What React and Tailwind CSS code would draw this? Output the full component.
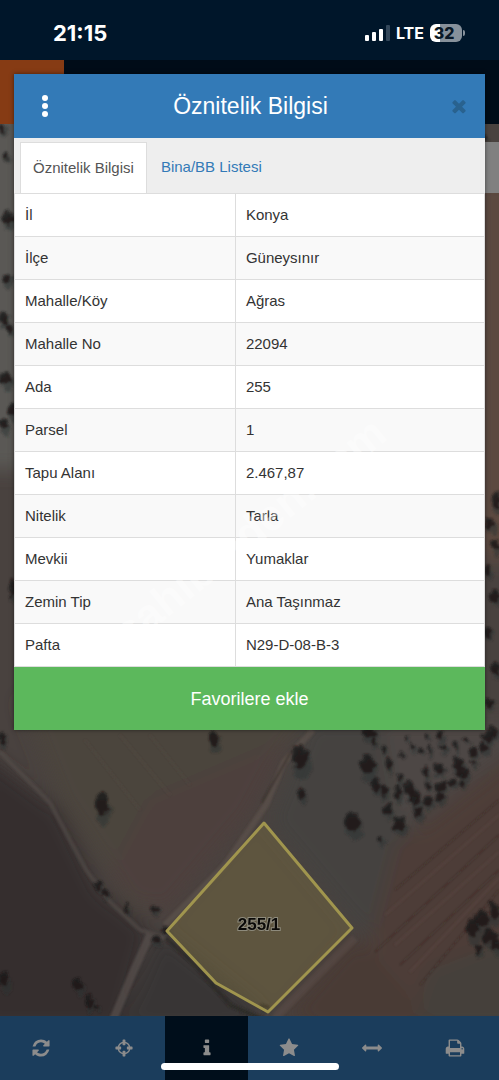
import React, { useState } from 'react';

const rows = [
  ['İl', 'Konya'],
  ['İlçe', 'Güneysınır'],
  ['Mahalle/Köy', 'Ağras'],
  ['Mahalle No', '22094'],
  ['Ada', '255'],
  ['Parsel', '1'],
  ['Tapu Alanı', '2.467,87'],
  ['Nitelik', 'Tarla'],
  ['Mevkii', 'Yumaklar'],
  ['Zemin Tip', 'Ana Taşınmaz'],
  ['Pafta', 'N29-D-08-B-3'],
];

const icons = {
  refresh:
    'M1639 1056q0 5-1 7-64 268-268 434.5t-478 166.5q-146 0-282.5-55t-243.5-157l-129 129q-19 19-45 19t-45-19-19-45v-448q0-26 19-45t45-19h448q26 0 45 19t19 45-19 45l-137 137q71 66 161 102t187 36q134 0 250-65t186-179q11-17 53-117 8-23 30-23h192q13 0 22.5 9.5t9.5 22.5zm25-800v448q0 26-19 45t-45 19h-448q-26 0-45-19t-19-45 19-45l138-138q-148-137-349-137-134 0-250 65t-186 179q-11 17-53 117-8 23-30 23h-199q-13 0-22.5-9.5t-9.5-22.5v-7q65-268 270-434.5t480-166.5q146 0 284 55.5t245 156.5l130-129q19-19 45-19t45 19 19 45z',
  locate:
    'M1325 1024h-109q-26 0-45-19t-19-45v-128q0-26 19-45t45-19h109q-32-108-112.5-188.5t-188.5-112.5v109q0 26-19 45t-45 19h-128q-26 0-45-19t-19-45v-109q-108 32-188.5 112.5t-112.5 188.5h109q26 0 45 19t19 45v128q0 26-19 45t-45 19h-109q32 108 112.5 188.5t188.5 112.5v-109q0-26 19-45t45-19h128q26 0 45 19t19 45v109q108-32 188.5-112.5t112.5-188.5zm339-192v128q0 26-19 45t-45 19h-143q-37 161-154.5 278.5t-278.5 154.5v143q0 26-19 45t-45 19h-128q-26 0-45-19t-19-45v-143q-161-37-278.5-154.5t-154.5-278.5h-143q-26 0-45-19t-19-45v-128q0-26 19-45t45-19h143q37-161 154.5-278.5t278.5-154.5v-143q0-26 19-45t45-19h128q26 0 45 19t19 45v143q161 37 278.5 154.5t154.5 278.5h143q26 0 45 19t19 45z',
  info:
    'M1216 1344v128q0 26-19 45t-45 19h-512q-26 0-45-19t-19-45v-128q0-26 19-45t45-19h64v-384h-64q-26 0-45-19t-19-45v-128q0-26 19-45t45-19h384q26 0 45 19t19 45v576h64q26 0 45 19t19 45zm-128-1152v192q0 26-19 45t-45 19h-256q-26 0-45-19t-19-45v-192q0-26 19-45t45-19h256q26 0 45 19t19 45z',
  star:
    'M1728 647q0 22-26 48l-363 354 86 500q1 7 1 20 0 21-10.5 35.5t-30.5 14.5q-19 0-40-12l-449-236-449 236q-22 12-40 12-21 0-31.5-14.5t-10.5-35.5q0-6 2-20l86-500-364-354q-25-27-25-48 0-37 56-46l502-73 225-455q19-41 49-41t49 41l225 455 502 73q56 9 56 46z',
  measure:
    'M1792 896q0 26-19 45l-256 256q-19 19-45 19t-45-19-19-45v-128h-1024v128q0 26-19 45t-45 19-45-19l-256-256q-19-19-19-45t19-45l256-256q19-19 45-19t45 19 19 45v128h1024v-128q0-26 19-45t45-19 45 19l256 256q19 19 19 45z',
  print:
    'M448 1536h896v-256h-896v256zm0-640h896v-384h-160q-40 0-68-28t-28-68v-160h-640v640zm1152 64q0-26-19-45t-45-19-45 19-19 45 19 45 45 19 45-19 19-45zm128 0v416q0 13-9.5 22.5t-22.5 9.5h-224v160q0 40-28 68t-68 28h-960q-40 0-68-28t-28-68v-160h-224q-13 0-22.5-9.5t-9.5-22.5v-416q0-79 56.5-135.5t135.5-56.5h64v-544q0-40 28-68t68-28h672q40 0 88 20t76 48l152 152q28 28 48 76t20 88v256h64q79 0 135.5 56.5t56.5 135.5z',
  close:
    'M1490 1322q0 40-28 68l-136 136q-28 28-68 28t-68-28l-294-294-294 294q-28 28-68 28t-68-28l-136-136q-28-28-28-68t28-68l294-294-294-294q-28-28-28-68t28-68l136-136q28-28 68-28t68 28l294 294 294-294q28-28 68-28t68 28l136 136q28 28 28 68t-28 68l-294 294 294 294q28 28 28 68z',
};

const tools = [
  { icon: 'refresh', label: 'Yenile' },
  { icon: 'locate', label: 'Konum' },
  { icon: 'info', label: 'Bilgi', active: true },
  { icon: 'star', label: 'Favoriler' },
  { icon: 'measure', label: 'Ölçüm' },
  { icon: 'print', label: 'Yazdır' },
];

// [x, y, rx, ry]
const trees = [
  [300, 757, 9, 14], [301, 794, 4, 7], [352, 822, 9, 11], [380, 839, 3, 5],
  [102, 804, 8, 13], [213, 738, 6, 10], [367, 764, 8, 11], [399, 824, 7, 8],
  [387, 810, 6, 6], [98, 886, 4, 5], [105, 893, 4, 4], [126, 909, 3, 5],
  [154, 909, 4, 4], [166, 930, 4, 4], [156, 940, 5, 4], [77, 984, 6, 7],
  [89, 1001, 4, 7], [97, 1008, 3, 3], [4, 979, 6, 9], [264, 1006, 4, 3],
  [473, 928, 7, 11], [482, 918, 8, 9], [494, 910, 6, 10], [489, 936, 8, 8],
  [478, 949, 4, 6], [496, 945, 5, 7],
  [369, 733, 7, 6], [374, 741, 3, 5], [376, 784, 5, 8], [384, 791, 4, 6],
  [388, 763, 3, 7], [384, 749, 3, 3], [399, 778, 3, 5], [398, 792, 4, 8],
  [409, 788, 5, 10], [415, 798, 6, 9], [418, 812, 5, 6], [428, 801, 6, 6],
  [425, 771, 3, 7], [428, 786, 3, 4], [438, 769, 6, 6], [441, 786, 6, 5],
  [440, 797, 5, 6], [452, 782, 5, 4], [458, 764, 7, 8], [463, 774, 6, 6],
  [443, 748, 5, 4], [440, 735, 4, 5], [412, 747, 3, 4], [421, 751, 3, 4],
  [429, 750, 2, 5], [406, 738, 2, 4], [455, 745, 2, 6], [466, 740, 4, 3],
  [473, 752, 4, 5], [483, 748, 5, 6], [488, 737, 6, 6], [494, 731, 5, 6],
  [427, 736, 2, 3], [401, 755, 2, 3], [462, 784, 3, 3], [474, 763, 3, 3],
  [2, 128, 4, 5], [6, 155, 4, 5], [8, 218, 6, 8], [6, 279, 6, 6],
  [3, 318, 5, 8], [9, 328, 4, 6], [5, 378, 7, 8], [12, 410, 5, 8],
  [4, 424, 5, 7], [13, 588, 4, 11], [483, 138, 5, 3], [2, 738, 3, 8],
  [496, 500, 5, 10], [489, 523, 5, 7], [495, 545, 5, 6], [487, 570, 4, 6],
  [494, 596, 5, 7], [488, 632, 4, 6], [495, 668, 5, 8], [489, 702, 4, 5],
];

const Icon = ({ name, className }) => (
  <svg viewBox="0 0 1792 1792" fill="currentColor" className={className} aria-hidden="true">
    <path d={icons[name]} />
  </svg>
);

const MapView = () => (
  <svg
    viewBox="0 0 499 1080"
    preserveAspectRatio="xMidYMid slice"
    className="absolute inset-0 h-full w-full"
    role="img"
    aria-label="Parsel haritası"
  >
    <defs>
      <filter id="soft" x="-10%" y="-10%" width="120%" height="120%">
        <feGaussianBlur stdDeviation="9" />
      </filter>
      <filter id="edge">
        <feGaussianBlur stdDeviation="1" />
      </filter>
      <filter id="canopy">
        <feTurbulence type="fractalNoise" baseFrequency="0.15" numOctaves="2" seed="4" />
        <feDisplacementMap in="SourceGraphic" scale="9" xChannelSelector="R" yChannelSelector="G" />
        <feGaussianBlur stdDeviation="1" />
      </filter>
    </defs>
    <rect width="499" height="1080" fill="#49423f" />
    <g filter="url(#soft)">
      <path d="M-20 100H24V470H-20Z" fill="#5a5854" />
      <path d="M475 180H520V560H475Z" fill="#5b4941" />
      <path d="M20 700H320L250 800 165 910 130 905 60 800Z" fill="#4c443e" />
      <path d="M150 800L290 740 250 815 165 915 110 875Z" fill="#4e413c" />
      <path d="M310 720H400L420 850 370 940 350 920 268 822Z" fill="#444341" />
      <path d="M380 720H510V750L400 830Z" fill="#4d4744" />
      <path d="M520 750L395 845 365 960 300 1030H520Z" fill="#4d3d37" />
      <path d="M-20 750L60 810 100 890 150 930 120 1030H-20Z" fill="#342e2e" />
      <path d="M160 930L260 1010V1030H120Z" fill="#393634" />
      <path d="M520 935L430 970 410 1030H520Z" fill="#45403b" />
      <path d="M280 1020L355 935 430 1020Z" fill="#483a35" />
    </g>
    <g fill="none" filter="url(#edge)">
      <path d="M0 752L50 803 86 870 110 902 140 930 165 938" stroke="#595350" strokeWidth="4" opacity=".5" />
      <path d="M313 730L284 762 266 805 225 865 165 925" stroke="#63564f" strokeWidth="6" opacity=".55" />
      <path d="M292 750L262 803" stroke="#2e2622" strokeWidth="2" opacity=".6" />
      <path d="M150 935L134 970 113 1020" stroke="#5d5551" strokeWidth="8" opacity=".6" />
      <path d="M166 938L195 965 230 1005 265 1020" stroke="#2a2724" strokeWidth="4" opacity=".7" />
      <path d="M355 938L275 1018" stroke="#5e5049" strokeWidth="8" opacity=".45" />
      <path d="M499 835L375 952M499 870L400 965M499 890L420 985M499 800L395 890" stroke="#30231f" strokeWidth="1" opacity=".6" />
      <path d="M499 815L385 915M499 852L395 945M499 878L410 972" stroke="#64504a" strokeWidth="2" opacity=".35" />
      <path d="M120 735L170 795M150 735L190 785M85 740L140 810" stroke="#5a5049" strokeWidth="2" opacity=".25" />
    </g>
    <g filter="url(#canopy)">
      {trees.map(([x, y, rx, ry], i) => (
        <g key={i}>
          <ellipse cx={x + 2} cy={y + ry * 0.6} rx={rx} ry={ry} fill="#2c3331" opacity=".5" />
          <ellipse cx={x} cy={y} rx={rx * 0.9} ry={ry * 0.85} fill="#1a1716" opacity=".8" />
        </g>
      ))}
    </g>
    <path
      d="M264 823L352 928 268 1012 216 983 167 931Z"
      fill="#7d7040"
      fillOpacity=".42"
      stroke="#a0954e"
      strokeWidth="3"
      strokeLinejoin="round"
    />
    <text
      x="259"
      y="930"
      textAnchor="middle"
      className="font-['Liberation_Sans',Arial,sans-serif] text-[17px] font-bold"
      fill="#0b0a08"
      stroke="#8d8a7c"
      strokeWidth="2"
      paintOrder="stroke"
    >
      255/1
    </text>
  </svg>
);

const StatusBar = () => (
  <div className="flex h-[60px] items-center justify-between bg-[#00162a] pt-1.5 pr-[34px] pl-[53px] text-white">
    <span className="font-['Inter',sans-serif] text-[22px] font-bold">21:15</span>
    <div className="flex items-center gap-1.5">
      <svg viewBox="0 0 25 16" className="h-4 w-[25px]" aria-hidden="true">
        <rect x="0" y="10" width="4" height="6" rx="1" fill="#fff" />
        <rect x="7" y="7" width="4" height="9" rx="1" fill="#fff" />
        <rect x="14" y="4" width="4" height="12" rx="1" fill="#fff" />
        <rect x="21" y="0" width="4" height="16" rx="1" fill="#33475a" />
      </svg>
      <span className="font-['Inter',sans-serif] text-base font-bold">LTE</span>
      <div className="flex items-center gap-px">
        <span className="flex h-[18px] w-8 items-center justify-center rounded-md bg-linear-to-r from-white from-32% to-[#87919b] to-32% pr-1 font-['Inter',sans-serif] text-base font-extrabold text-[#0a1826]">
          32
        </span>
        <span className="h-1.5 w-0.5 rounded-r bg-[#87919b]" />
      </div>
    </div>
  </div>
);

const InfoDialog = () => {
  const [tab, setTab] = useState('info');

  return (
    <section
      role="dialog"
      aria-label="Öznitelik Bilgisi"
      className="absolute inset-x-3.5 top-[74px] shadow-[0_0_4px_rgba(0,0,0,0.5)]"
    >
      <header className="flex h-16 items-center justify-between bg-[#337ab7] pr-2.5 pl-[18px]">
        <button type="button" aria-label="Menü" className="flex w-[26px] flex-col items-center gap-0.5">
          <span className="h-1.5 w-1.5 rounded-full bg-white" />
          <span className="h-1.5 w-1.5 rounded-full bg-white" />
          <span className="h-1.5 w-1.5 rounded-full bg-white" />
        </button>
        <h1 className="text-[23px] text-white">Öznitelik Bilgisi</h1>
        <button type="button" aria-label="Kapat" className="flex w-8 justify-center text-[#29628f]">
          <Icon name="close" className="h-5 w-5 shrink-0" />
        </button>
      </header>

      <div role="tablist" className="flex h-[55px] items-end bg-[#eeeeee] pl-1.5">
        <button
          type="button"
          role="tab"
          aria-selected={tab === 'info'}
          onClick={() => setTab('info')}
          className="h-[51px] border border-b-0 border-[#dddddd] bg-white px-3 text-[15px] text-[#555555]"
        >
          Öznitelik Bilgisi
        </button>
        <button
          type="button"
          role="tab"
          aria-selected={tab === 'list'}
          onClick={() => setTab('list')}
          className="h-[51px] px-3.5 text-[15px] text-[#337ab7]"
        >
          Bina/BB Listesi
        </button>
      </div>

      <table className="w-full table-fixed border-collapse bg-white text-[15px] text-[#333333]">
        <tbody>
          {rows.map(([name, value]) => (
            <tr key={name} className="h-[43px] even:bg-[#f9f9f9]">
              <th scope="row" className="w-[47%] border border-[#dddddd] px-2.5 text-left font-normal">
                {name}
              </th>
              <td className="border border-[#dddddd] px-2.5">{value}</td>
            </tr>
          ))}
        </tbody>
      </table>

      <button type="button" className="h-[63px] w-full bg-[#5cb85c] text-lg text-white">
        Favorilere ekle
      </button>
    </section>
  );
};

export default function App() {
  return (
    <div className="relative flex h-screen flex-col overflow-hidden bg-[#49423f] font-['Liberation_Sans',Arial,sans-serif]">
      <MapView />
      <div className="relative">
        <StatusBar />
        <div className="h-16 bg-[#000c18]">
          <div className="h-full w-16 bg-[#863b14]" />
        </div>
      </div>
      <div className="relative flex flex-1 items-start justify-end pt-[18px]">
        <div className="h-[51px] w-4 bg-[#808080]" />
      </div>

      <nav className="relative grid h-16 grid-cols-6 bg-[#1b3d5c] pr-[3px]">
        {tools.map((tool) => (
          <button
            key={tool.icon}
            type="button"
            aria-label={tool.label}
            className={`flex items-center justify-center text-[#8c8c8c] ${tool.active ? 'bg-[#000e1b]' : ''}`}
          >
            <Icon name={tool.icon} className="h-5 w-5" />
          </button>
        ))}
      </nav>

      <InfoDialog />

      {/* watermark */}
      <div className="pointer-events-none absolute inset-x-0 top-[510px] flex justify-center">
        <span className="-rotate-[39deg] text-[44px] leading-none font-bold text-white/40">sahibinden.com</span>
      </div>

      {/* home indicator */}
      <div className="absolute bottom-2.5 left-1/2 h-[7px] w-[178px] -translate-x-1/2 rounded-full bg-white" />
    </div>
  );
}
